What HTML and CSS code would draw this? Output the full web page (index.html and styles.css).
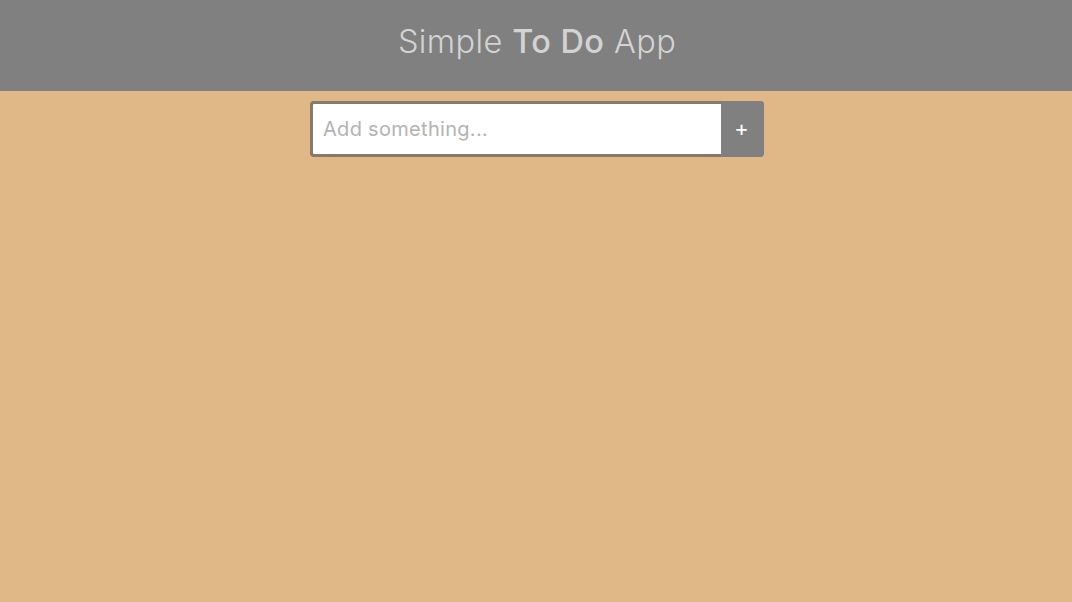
FILE: index.html
```html
<!DOCTYPE html>
<html lang="en">
<head>
<meta charset="utf-8">
<title>Simple To Do App</title>
<link rel="stylesheet" href="styles.css">
</head>
<body>
<header class="header">
  <h1 class="title">Simple <span class="title-strong">To Do</span> App</h1>
</header>
<main class="main">
  <form class="todo-form">
    <input class="todo-input" type="text" placeholder="Add something...">
    <button class="todo-add" type="button">+</button>
  </form>
</main>
</body>
</html>
```
FILE: styles.css
```css
* { box-sizing: border-box; }
html, body { height: 100%; }
body {
  margin: 0;
  background: #e0b887;
  font-family: "Inter", "Lato", sans-serif;
}
.header {
  height: 91px;
  background: #808080;
  display: flex;
  align-items: center;
  justify-content: center;
}
.title {
  margin: 0;
  font-weight: 300;
  font-size: 32.5px;
  letter-spacing: 0.4px;
  color: #d3d3d3;
  padding-bottom: 8px;
  padding-left: 2px;
}
.title-strong { font-weight: 500; }
.main {
  display: flex;
  justify-content: center;
  padding-top: 10px;
  padding-left: 2px;
}
.todo-form {
  display: flex;
  width: 454px;
  height: 56px;
  border-radius: 4px;
  overflow: hidden;
  background: #808080;
}
.todo-input {
  flex: 1;
  margin: 0;
  height: 56px;
  border: 3px solid #857a6b;
  border-right: none;
  border-radius: 4px 0 0 4px;
  background: #fff;
  padding: 0 10px;
  font-family: inherit;
  font-size: 20px;
  font-weight: 400;
  letter-spacing: 0.3px;
  color: #555;
  outline: none;
}
.todo-input::placeholder { color: #b3b3b3; }
.todo-add {
  width: 43px;
  border: none;
  margin: 0;
  background: #808080;
  color: #fff;
  font-family: inherit;
  font-size: 22px;
  font-weight: 400;
  padding: 0 2px 2px 0;
  cursor: pointer;
}
```
